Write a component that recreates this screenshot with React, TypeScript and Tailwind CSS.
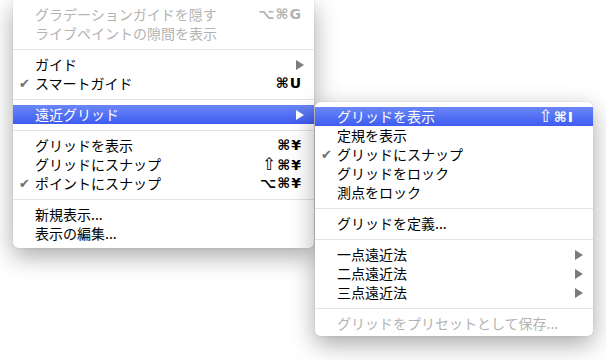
import React from "react"

type Item =
  | "sep"
  | {
      label: string
      check?: boolean
      shortcut?: string
      arrow?: boolean
      disabled?: boolean
      active?: boolean
    }

const viewMenu: Item[] = [
  { label: "グラデーションガイドを隠す", shortcut: "⌥⌘G", disabled: true },
  { label: "ライブペイントの隙間を表示", disabled: true },
  "sep",
  { label: "ガイド", arrow: true },
  { label: "スマートガイド", check: true, shortcut: "⌘U" },
  "sep",
  { label: "遠近グリッド", arrow: true, active: true },
  "sep",
  { label: "グリッドを表示", shortcut: "⌘¥" },
  { label: "グリッドにスナップ", shortcut: "⇧⌘¥" },
  { label: "ポイントにスナップ", check: true, shortcut: "⌥⌘¥" },
  "sep",
  { label: "新規表示..." },
  { label: "表示の編集..." },
]

const gridMenu: Item[] = [
  { label: "グリッドを表示", shortcut: "⇧⌘I", active: true },
  { label: "定規を表示" },
  { label: "グリッドにスナップ", check: true },
  { label: "グリッドをロック" },
  { label: "測点をロック" },
  "sep",
  { label: "グリッドを定義..." },
  "sep",
  { label: "一点遠近法", arrow: true },
  { label: "二点遠近法", arrow: true },
  { label: "三点遠近法", arrow: true },
  "sep",
  { label: "グリッドをプリセットとして保存...", disabled: true },
]

function Arrow({ white }: { white: boolean }) {
  return (
    <svg width="8" height="10" viewBox="0 0 8 10" className="shrink-0">
      <polygon points="0,0 8,5 0,10" fill={white ? "#ffffff" : "#7b7b7b"} />
    </svg>
  )
}

// shift glyph renders tiny in DejaVu, so bump it up
function Keys({ keys }: { keys: string }) {
  return (
    <>
      {[...keys].map((k, i) => (
        <span key={i} className={k === "⇧" ? "text-[17px] font-normal" : ""}>
          {k}
        </span>
      ))}
    </>
  )
}

function MenuRows({ items, keyPad }: { items: Item[]; keyPad: string }) {
  return (
    <>
      {items.map((it, i) => {
        if (it === "sep") {
          return (
            <div key={i} className="flex h-[12px] items-center">
              <div className="h-px w-full bg-[#e3e3e3]" />
            </div>
          )
        }
        const txt = it.active ? "text-white" : it.disabled ? "text-[#b3b3b3]" : "text-black"
        return (
          <div
            key={i}
            className={`relative flex h-[19px] items-center ${it.active ? "bg-gradient-to-b from-[#6a86f6] to-[#3f5cf0]" : ""}`}
          >
            {it.check && (
              <span className="absolute left-[6px] top-0 font-['DejaVu_Sans',sans-serif] text-[13px] leading-[19px] text-[#6e6e6e]">
                ✔
              </span>
            )}
            <span className={`pl-[22px] leading-[19px] ${txt}`}>{it.label}</span>
            <span className="flex-1" />
            {it.shortcut && (
              <span
                className={`${keyPad} font-['DejaVu_Sans',sans-serif] text-[14px] font-semibold leading-[19px] tracking-[1px] ${txt}`}
              >
                <Keys keys={it.shortcut} />
              </span>
            )}
            {it.arrow && (
              <span className="pr-[10px]">
                <Arrow white={!!it.active} />
              </span>
            )}
          </div>
        )
      })}
    </>
  )
}

export default function App() {
  return (
    <div className="relative h-[360px] w-[606px] overflow-hidden bg-white font-['Noto_Sans_CJK_JP',sans-serif] text-[14px]">
      <div className="absolute left-[13px] top-0 w-[301px] rounded-b-[5px] bg-white pt-[5px] pb-[5px] shadow-[0_8px_24px_rgba(0,0,0,0.35),0_0_1px_rgba(0,0,0,0.3)]">
        <MenuRows items={viewMenu} keyPad="pr-[12px]" />
      </div>
      <div className="absolute left-[315px] top-[102px] w-[278px] rounded-[5px] bg-white pt-[5px] pb-[3px] shadow-[0_8px_24px_rgba(0,0,0,0.35),0_0_1px_rgba(0,0,0,0.3)]">
        <MenuRows items={gridMenu} keyPad="pr-[19px]" />
      </div>
    </div>
  )
}
